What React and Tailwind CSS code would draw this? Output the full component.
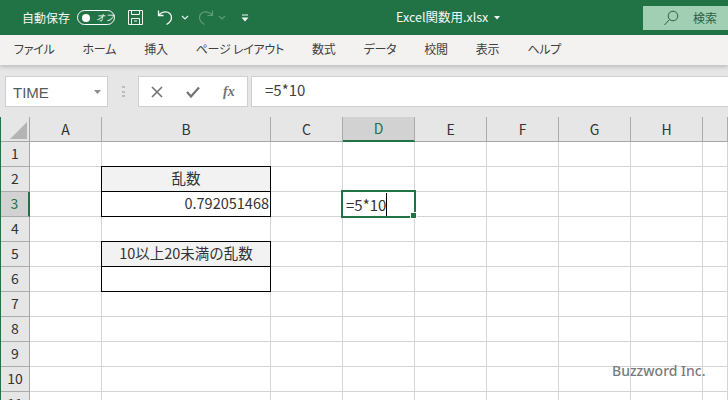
import { Fragment } from "react";

const font = { fontFamily: '"Noto Sans CJK JP", "Noto Sans", sans-serif' };
const tabs = ["ファイル", "ホーム", "挿入", "ページ レイアウト", "数式", "データ", "校閲", "表示", "ヘルプ"];
const cols = ["A", "B", "C", "D", "E", "F", "G", "H", ""];
const rows = [1, 2, 3, 4, 5, 6, 7, 8, 9, 10, 11];

function Chevron({ className }) {
  return (
    <svg width="8" height="5" viewBox="0 0 8 5" fill="none" stroke="currentColor" strokeWidth="1.2" className={className}>
      <path d="M1 1l3 3 3-3" />
    </svg>
  );
}

function TitleBar() {
  return (
    <div className="h-[35px] shrink-0 bg-[#217346] text-[#f4f8f5] flex items-center relative">
      <span className="ml-[22px] text-[12px] w-[50px] whitespace-nowrap">自動保存</span>
      <div className="ml-[5px] w-[38px] h-[15px] rounded-full border border-white flex items-center">
        <span className="ml-[4px] w-[8px] h-[8px] rounded-full bg-white"></span>
        <span className="ml-[6px] text-[9px] italic leading-none">オフ</span>
      </div>
      <svg width="17" height="17" viewBox="0 0 17 17" fill="none" stroke="#f0f5f1" strokeWidth="1" className="ml-[12px]">
        <path d="M1.500 1.500h14v14h-14zM4.500 1.500v4h8v-4M4.500 15.500v-6h8v6M7 12h3" />
      </svg>
      <svg width="17" height="17" viewBox="0 0 17 17" fill="none" stroke="#f4f8f5" strokeWidth="1.3" className="ml-[13px]">
        <path d="M1.500 1.500v5h5M1.800 6.300C3.500 4 5.500 2.800 8.500 2.800c3.500 0 6 2.500 6 5.700 0 3-2 5.200-5 7" />
      </svg>
      <Chevron className="ml-[7px] text-[#e8f1eb]" />
      <svg width="17" height="17" viewBox="0 0 17 17" fill="none" stroke="#5d9c79" strokeWidth="1.2" className="ml-[8px]">
        <path d="M15.500 1.500v5h-5M15.200 6.300C13.500 4 11.500 2.800 8.500 2.800c-3.500 0-6 2.500-6 5.700 0 3 2 5.200 5 7" />
      </svg>
      <Chevron className="ml-[4px] text-[#5d9c79]" />
      <svg width="8" height="8" viewBox="0 0 8 8" fill="#f4f8f5" className="ml-[15px]">
        <path d="M1 0.500h6v1H1zM0.500 3.500h7L4 7.500z" />
      </svg>
      <span className="ml-[147px] text-[12.500px] whitespace-nowrap">Excel関数用.xlsx</span>
      <svg width="6" height="4" viewBox="0 0 6 4" fill="#f4f8f5" className="ml-[6px]">
        <path d="M0 0h6L3 3.500z" />
      </svg>
      <div className="ml-auto mt-[1px] w-[85px] h-[24px] bg-[#a0cfb4] text-[#2d5f45] flex items-center">
        <svg width="16" height="16" viewBox="0 0 16 16" fill="none" stroke="currentColor" strokeWidth="1" className="ml-[20px]">
          <circle cx="10" cy="6" r="4.800" />
          <path d="M6.500 9.500L1.500 15" />
        </svg>
        <span className="ml-[14px] text-[12px] whitespace-nowrap">検索</span>
      </div>
    </div>
  );
}

function RibbonTabs() {
  return (
    <div className="h-[30px] shrink-0 bg-[#f3f2f1] flex items-center gap-[28px] pl-[14px] pb-[2px] text-[12px] tracking-[-0.25px] text-[#404040] [font-feature-settings:'palt'] shadow-[0_2px_4px_rgba(0,0,0,0.18)] relative">
      {tabs.map((t) => (
        <span key={t} className="whitespace-nowrap">{t}</span>
      ))}
    </div>
  );
}

function FormulaBar() {
  return (
    <div className="h-[52px] shrink-0 bg-[#e6e6e6] flex items-start pt-[11px] pl-[5px]">
      <div className="w-[103px] h-[31px] bg-white border border-[#cfcfcf] flex items-center pl-[7px] pr-[6px] text-[15px] text-[#595959]">
        <span className="mt-[3px]" style={{ fontFamily: '"Liberation Sans", sans-serif' }}>TIME</span>
        <svg width="7" height="4" viewBox="0 0 7 4" fill="#8c8c8c" className="ml-auto">
          <path d="M0 0h7L3.500 4z" />
        </svg>
      </div>
      <div className="ml-[14px] w-[3px] h-[11px] mt-[10px] flex flex-col justify-between">
        <span className="h-[2px] bg-[#bdbdbd]"></span>
        <span className="h-[2px] bg-[#bdbdbd]"></span>
        <span className="h-[2px] bg-[#bdbdbd]"></span>
      </div>
      <div className="ml-[13px] w-[110px] h-[31px] bg-white border border-[#cfcfcf] flex items-center text-[#737373]">
        <svg width="12" height="12" viewBox="0 0 12 12" fill="none" stroke="currentColor" strokeWidth="1.600" className="ml-[12px]">
          <path d="M1 1l10 10M11 1L1 11" />
        </svg>
        <svg width="14" height="12" viewBox="0 0 14 12" fill="none" stroke="currentColor" strokeWidth="2.200" className="ml-[23px]">
          <path d="M1 6l4 4.500L13 1.500" />
        </svg>
        <span className="ml-[23px] text-[14px] italic font-bold leading-none" style={{ fontFamily: '"Liberation Serif", serif' }}>fx</span>
      </div>
      <div className="ml-[3px] flex-1 h-[31px] bg-white border border-r-0 border-[#cfcfcf] flex items-center pl-[13px] text-[15px] text-[#404040]">
        <span className="-mt-[2px]">=5*10</span>
      </div>
    </div>
  );
}

function cellClass(col, row) {
  const boxed = col === "B" && [2, 3, 5, 6].includes(row);
  const base = "relative border-r border-b text-[14.500px] text-[#333] flex items-center whitespace-nowrap pb-[2px] ";
  if (boxed) {
    const fill = row === 2 || row === 5 ? "bg-[#f2f2f2] justify-center " : "bg-white justify-end pr-[1px] ";
    return base + fill + "border-black border-l border-t -ml-[1px] -mt-[1px]";
  }
  return base + "bg-white border-[#d4d4d4]";
}

function cellText(col, row) {
  if (col !== "B") return null;
  if (row === 2) return "乱数";
  if (row === 3) return "0.792051468";
  if (row === 5) return "10以上20未満の乱数";
  return null;
}

function Sheet() {
  return (
    <div className="flex-1 grid grid-cols-[29px_72px_169px_72px_72px_72px_72px_72px_72px_25px] grid-rows-[25px_repeat(11,25px)] bg-white overflow-hidden border-l border-[#217346]">
      <div className="bg-[#e6e6e6] border-r border-b border-[#a6a6a6] flex items-end justify-end p-[2px]">
        <svg width="17" height="17" viewBox="0 0 17 17" fill="#b4b4b4">
          <path d="M17 0v17H0z" />
        </svg>
      </div>
      {cols.map((c) => (
        <div
          key={c || "rest"}
          className={
            c === "D"
              ? "bg-[#d2d2d2] border-r border-[#ababab] border-b-2 border-b-[#217346] text-[#217346] text-[14px] flex items-center justify-center"
              : "bg-[#e6e6e6] border-r border-b border-r-[#ababab] border-b-[#a6a6a6] text-[14px] text-[#333] flex items-center justify-center"
          }
        >
          {c}
        </div>
      ))}
      {rows.map((r) => (
        <Fragment key={r}>
          <div
            className={
              r === 3
                ? "bg-[#d2d2d2] border-r-2 border-b border-r-[#217346] border-b-[#ababab] pb-[2px] text-[14px] text-[#217346] flex items-center justify-center"
                : "bg-[#e6e6e6] border-r border-b border-r-[#a6a6a6] border-b-[#ababab] pb-[2px] text-[14px] text-[#333] flex items-center justify-center"
            }
          >
            {r}
          </div>
          {cols.map((c) => (
            <div key={c} className={cellClass(c, r)}>
              <span>{cellText(c, r)}</span>
              {c === "D" && r === 3 && (
                <div className="absolute -left-[2px] -top-[2px] w-[75px] h-[28px] border-2 border-[#217346] flex items-center pl-[3px] z-10">
                  <span className="text-[15px] text-[#333] border-r border-black leading-[23px] h-[23px]">=5*10</span>
                  <span className="absolute -right-[3px] -bottom-[3px] w-[5px] h-[5px] bg-[#217346] border border-white box-content"></span>
                </div>
              )}
            </div>
          ))}
        </Fragment>
      ))}
    </div>
  );
}

export default function App() {
  return (
    <div className="w-[728px] h-[400px] overflow-hidden relative flex flex-col bg-white" style={font}>
      <TitleBar />
      <RibbonTabs />
      <FormulaBar />
      <Sheet />
      <span className="absolute left-[612px] top-[360px] text-[14px] font-medium text-[#7a7a7a] z-20" style={{ fontFamily: '"Noto Sans", sans-serif' }}>Buzzword Inc.</span>
    </div>
  );
}
